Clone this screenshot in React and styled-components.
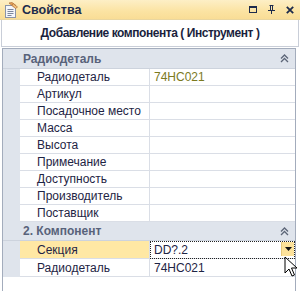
import React from 'react';
import styled, { createGlobalStyle } from 'styled-components';

const GlobalStyle = createGlobalStyle`
  body {
    margin: 0;
    background: #ffffff;
    font-family: "Liberation Sans", Arial, sans-serif;
  }
`;

const Panel = styled.div`
  position: relative;
  width: 300px;
  height: 291px;
  display: flex;
  flex-direction: column;
  background: #ffffff;
  box-sizing: border-box;
  overflow: hidden;
`;

const TitleBar = styled.div`
  height: 19px;
  display: flex;
  align-items: center;
  padding: 0 6px 0 3px;
  background: linear-gradient(#fdefc6, #fbe3a2 60%, #f9dd96);
  border-bottom: 1px solid #e9d6a0;
`;

const TitleText = styled.span`
  margin-left: 3px;
  font-size: 12.5px;
  font-weight: bold;
  color: #1d2b4c;
  flex: 1;
`;

const TitleButtons = styled.div`
  display: flex;
  align-items: center;
  gap: 11px;
  color: #1d2b4c;
`;

const Caption = styled.div`
  height: 26px;
  margin: 0 1px;
  display: flex;
  align-items: center;
  justify-content: center;
  border: 1px solid #c9ced8;
  border-top: none;
  font-size: 12px;
  font-weight: bold;
  letter-spacing: -0.45px;
  color: #1b1f3d;
`;

const Grid = styled.div`
  flex: 1;
  margin: 1px 4px 0 2px;
  border: 1px solid #a3acbc;
  border-bottom: none;
  background: #ffffff;
`;

const Category = styled.div`
  height: ${p => p.h}px;
  display: flex;
  align-items: center;
  padding: 0 6px 0 20px;
  background: #dfe4ec;
  border-bottom: 1px solid #cdd3dd;
  font-size: 12px;
  font-weight: bold;
  color: #58627a;
  box-sizing: border-box;
`;

const CategoryName = styled.span`
  flex: 1;
`;

const Row = styled.div`
  height: ${p => p.h}px;
  display: grid;
  grid-template-columns: 17px 130px 1fr;
  box-sizing: border-box;
  font-size: 12px;
`;

const Gutter = styled.div`
  background: #dfe4ec;
`;

const Label = styled.div`
  display: flex;
  align-items: center;
  padding-left: 17px;
  color: #1e2444;
  background: ${p => (p.active ? '#ffe8a4' : '#ffffff')};
  border-bottom: 1px solid #dadee6;
  border-right: 1px solid #dadee6;
`;

const Value = styled.div`
  position: relative;
  display: flex;
  align-items: center;
  padding-left: 4px;
  color: ${p => p.color || '#1e2444'};
  border-bottom: 1px solid #dadee6;
  ${p => p.focused && `
    outline: 1px dotted #222;
    outline-offset: -1px;
  `}
`;

const DropButton = styled.div`
  position: absolute;
  right: 1px;
  top: 1px;
  bottom: 2px;
  width: 12px;
  display: flex;
  align-items: center;
  justify-content: center;
  background: #fde29a;
  border-left: 1px solid #e6c87a;
`;

const Cursor = styled.svg`
  position: absolute;
  left: 284px;
  top: 256px;
`;

const Chevron = () => (
  <svg width="9" height="9" viewBox="0 0 9 9">
    <path d="M1 4.5 L4.5 1 L8 4.5 M1 8 L4.5 4.5 L8 8" fill="none" stroke="#5d6678" strokeWidth="1.3" />
  </svg>
);

const PropsIcon = () => (
  <svg width="16" height="16" viewBox="0 0 16 16">
    <rect x="2.5" y="3.5" width="10" height="12" fill="#f4f6fa" stroke="#8a94a8" />
    <path d="M4.5 7.5h6M4.5 9.5h6M4.5 11.5h6M4.5 13.5h4" stroke="#7c879c" />
    <path d="M6 1 L11 5 L13 3.5 L9 0.5 Z" fill="#e8a45a" stroke="#b0703a" strokeWidth="0.7" />
    <path d="M10 1.5 L14.5 5 L12.5 6.5 L9 3.5 Z" fill="#f2c07a" stroke="#b0703a" strokeWidth="0.7" />
  </svg>
);

const sectionOne = [
  ['Радиодеталь', '74HC021', '#7b7a1e'],
  ['Артикул', ''],
  ['Посадочное место', ''],
  ['Масса', ''],
  ['Высота', ''],
  ['Примечание', ''],
  ['Доступность', ''],
  ['Производитель', ''],
  ['Поставщик', ''],
];

const App = () => {
  return (
    <>
      <GlobalStyle />
      <Panel>
        <TitleBar>
          <PropsIcon />
          <TitleText>Свойства</TitleText>
          <TitleButtons>
            <svg width="8" height="7" viewBox="0 0 8 7">
              <rect x="0.5" y="0.5" width="7" height="6" fill="none" stroke="currentColor" />
              <rect x="0" y="0" width="8" height="2" fill="currentColor" />
            </svg>
            <svg width="7" height="9" viewBox="0 0 7 9">
              <path d="M1.5 0.5h4M2.5 0.5v5M4.5 0.5v5M0 5.5h7M3.5 5.5v3.5" fill="none" stroke="currentColor" />
            </svg>
            <svg width="8" height="8" viewBox="0 0 8 8">
              <path d="M0.8 0.8 L7.2 7.2 M7.2 0.8 L0.8 7.2" stroke="currentColor" strokeWidth="1.8" />
            </svg>
          </TitleButtons>
        </TitleBar>
        <Caption>Добавление компонента ( Инструмент )</Caption>
        <Grid>
          <Category h={20}>
            <CategoryName>Радиодеталь</CategoryName>
            <Chevron />
          </Category>
          {sectionOne.map(([name, value, color]) => (
            <Row h={17} key={name}>
              <Gutter />
              <Label>{name}</Label>
              <Value color={color}>{value}</Value>
            </Row>
          ))}
          <Category h={19}>
            <CategoryName>2. Компонент</CategoryName>
            <Chevron />
          </Category>
          <Row h={18}>
            <Gutter />
            <Label active>Секция</Label>
            <Value focused>
              DD?.2
              <DropButton>
                <svg width="7" height="4" viewBox="0 0 7 4">
                  <path d="M0 0 H7 L3.5 4 Z" fill="#111" />
                </svg>
              </DropButton>
            </Value>
          </Row>
          <Row h={18}>
            <Gutter />
            <Label>Радиодеталь</Label>
            <Value>74HC021</Value>
          </Row>
        </Grid>
        <Cursor width="14" height="22" viewBox="0 0 14 22">
          <path d="M1 1 L1 17 L5 13 L8 20 L10.5 19 L7.5 12 L13 12 Z" fill="#ffffff" stroke="#000000" strokeWidth="1" strokeLinejoin="round" />
        </Cursor>
      </Panel>
    </>
  );
};

export default App;
